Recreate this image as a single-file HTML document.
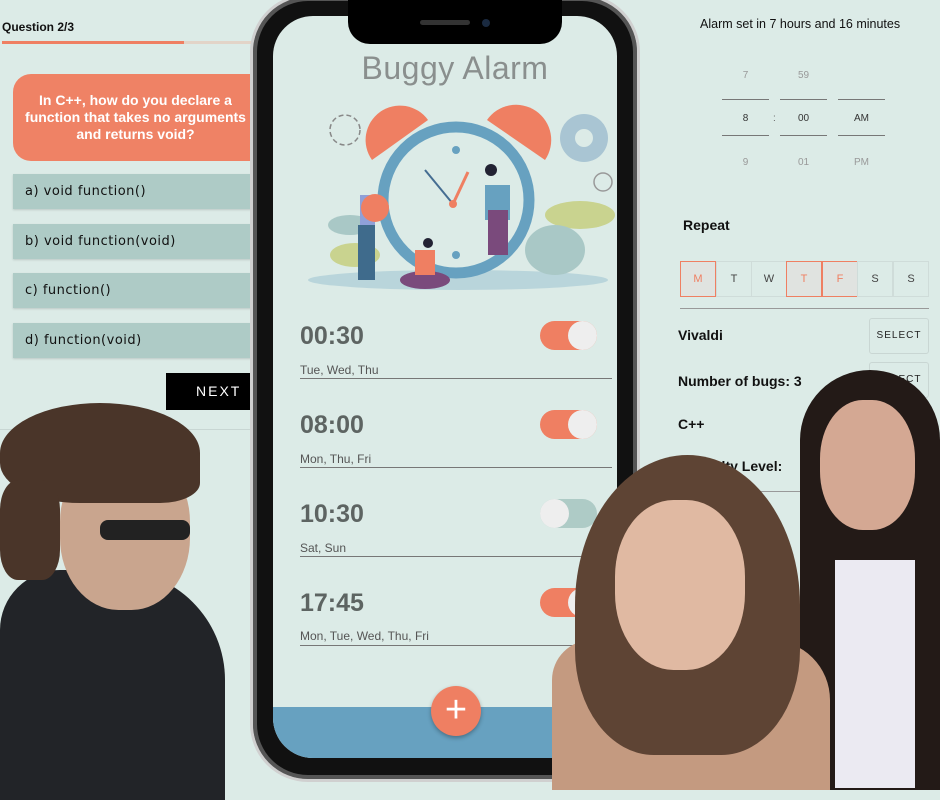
<!DOCTYPE html>
<html><head><meta charset="utf-8"><style>
*{margin:0;padding:0;box-sizing:border-box}
body{width:940px;height:788px;overflow:hidden;background:#dcebe7;font-family:"Liberation Sans",sans-serif;position:relative}
.a{position:absolute}
.opt{position:absolute;left:13px;width:240px;height:35px;background:#aecbc6;font-family:"DejaVu Sans",sans-serif;font-size:13px;letter-spacing:.5px;color:#111;padding:10px 12px;box-shadow:0 1px 2px rgba(0,0,0,.15)}
.t{position:absolute;left:300px;font-weight:bold;font-size:25px;color:#5d6462}
.d{position:absolute;left:300px;font-size:12px;color:#555}
.ln{position:absolute;left:300px;width:312px;height:1px;background:#777}
.tg{position:absolute;left:540px;width:57px;height:29px;border-radius:15px;background:#ef7f62}
.tg i{position:absolute;top:0;right:0;width:29px;height:29px;border-radius:50%;background:#eee}
.day{position:absolute;top:261px;width:36px;height:36px;border:1px solid #cfdcd9;font-size:11px;color:#444;text-align:center;line-height:34px}
.day.on{border-color:#ef7f62;color:#ef7f62;background:#e0e3e0}
.pk{position:absolute;font-size:10px;color:#999;text-align:center;width:47px}
.sel{position:absolute;left:869px;width:60px;height:36px;border:1px solid #c9d6d3;border-radius:3px;font-size:10px;letter-spacing:1px;color:#222;text-align:center;line-height:34px}
.lb{position:absolute;left:678px;font-weight:bold;font-size:14px;color:#111}
</style></head><body>
<div class="a" style="left:2px;top:20px;font-weight:bold;font-size:12px;color:#111">Question 2/3</div>
<div class="a" style="left:2px;top:41px;width:182px;height:3px;background:#ef7f62"></div>
<div class="a" style="left:184px;top:41px;width:70px;height:3px;background:#e2d4c8"></div>
<div class="a" style="left:13px;top:74px;width:245px;height:87px;background:#ef8265;border-radius:18px 0 0 18px;color:#fff;font-weight:bold;font-size:14px;text-align:center;line-height:17px;padding-top:18px">In C++, how do you declare a<br>function that takes no arguments<br>and returns void?</div>
<div class="opt" style="top:174px">a) void function()</div>
<div class="opt" style="top:224px">b) void function(void)</div>
<div class="opt" style="top:273px">c) function()</div>
<div class="opt" style="top:323px">d) function(void)</div>
<div class="a" style="left:166px;top:373px;width:90px;height:37px;background:#000;color:#fff;font-size:14px;letter-spacing:2px;padding:10px 0 0 30px">NEXT</div>
<div class="a" style="left:0;top:429px;width:250px;height:1px;background:#c8d6d3"></div>
<div class="a" style="left:700px;top:17px;font-size:12.5px;color:#111">Alarm set in 7 hours and 16 minutes</div>
<div class="pk" style="left:722px;top:70px">7</div><div class="pk" style="left:780px;top:70px">59</div>
<div class="a" style="left:722px;top:99px;width:47px;height:1px;background:#777"></div><div class="a" style="left:780px;top:99px;width:47px;height:1px;background:#777"></div><div class="a" style="left:838px;top:99px;width:47px;height:1px;background:#777"></div>
<div class="pk" style="left:722px;top:113px;color:#333">8</div><div class="a" style="left:773px;top:113px;font-size:10px;color:#666">:</div><div class="pk" style="left:780px;top:113px;color:#333">00</div><div class="pk" style="left:838px;top:113px;color:#333">AM</div>
<div class="a" style="left:722px;top:135px;width:47px;height:1px;background:#777"></div><div class="a" style="left:780px;top:135px;width:47px;height:1px;background:#777"></div><div class="a" style="left:838px;top:135px;width:47px;height:1px;background:#777"></div>
<div class="pk" style="left:722px;top:157px">9</div><div class="pk" style="left:780px;top:157px">01</div><div class="pk" style="left:838px;top:157px">PM</div>
<div class="a" style="left:683px;top:217px;font-weight:bold;font-size:14px;color:#111">Repeat</div>
<div class="day on" style="left:680px">M</div><div class="day" style="left:716px">T</div><div class="day" style="left:751px">W</div><div class="day on" style="left:786px">T</div><div class="day on" style="left:822px">F</div><div class="day" style="left:857px">S</div><div class="day" style="left:893px">S</div>
<div class="a" style="left:680px;top:308px;width:249px;height:1px;background:#999"></div>
<div class="lb" style="top:327px">Vivaldi</div><div class="sel" style="top:318px">SELECT</div>
<div class="lb" style="top:373px">Number of bugs: 3</div><div class="sel" style="top:362px">SELECT</div>
<div class="lb" style="top:416px">C++</div><div class="sel" style="top:405px">SELECT</div>
<div class="lb" style="top:458px">Difficulty Level:</div>
<div class="a" style="left:680px;top:491px;width:150px;height:1px;background:#999"></div>
<div class="a" style="left:250px;top:-6px;width:390px;height:788px;border-radius:58px;background:#111;border:3px solid #d0d0d0;box-shadow:inset 0 0 0 4px #555"></div>
<div class="a" style="left:273px;top:16px;width:344px;height:742px;border-radius:40px;background:#dcebe7;overflow:hidden">
 <div class="a" style="left:0;top:691px;width:344px;height:51px;background:#67a1c0"></div>
</div>
<div class="a" style="left:348px;top:0;width:214px;height:44px;background:#000;border-radius:0 0 22px 22px"></div>
<div class="a" style="left:420px;top:20px;width:50px;height:5px;border-radius:3px;background:#333"></div>
<div class="a" style="left:482px;top:19px;width:8px;height:8px;border-radius:50%;background:#1a2a40"></div>
<div class="a" style="left:273px;top:50px;width:364px;text-align:center;font-size:32px;color:#8a8f8e;letter-spacing:.5px">Buggy Alarm</div>
<svg class="a" style="left:300px;top:100px" width="315" height="195" viewBox="300 100 315 195">
 <ellipse cx="458" cy="280" rx="150" ry="10" fill="#b9d5db"/>
 <ellipse cx="580" cy="215" rx="35" ry="14" fill="#c9d38f"/>
 <ellipse cx="555" cy="250" rx="30" ry="25" fill="#a9c8c6"/>
 <ellipse cx="350" cy="225" rx="22" ry="10" fill="#a9c8c6"/>
 <ellipse cx="355" cy="255" rx="25" ry="12" fill="#c9d38f"/>
 <circle cx="345" cy="130" r="15" fill="none" stroke="#888" stroke-width="1.5" stroke-dasharray="5 3"/>
 <circle cx="584" cy="138" r="24" fill="#a9c5d3"/><circle cx="584" cy="138" r="9" fill="#dcebe7"/>
 <circle cx="603" cy="182" r="9" fill="none" stroke="#999" stroke-width="1.5"/>
 <path d="M372 160 A30 30 0 0 1 428 120 Z" fill="#ef7f62"/>
 <path d="M487 120 A30 30 0 0 1 545 160 Z" fill="#ef7f62"/>
 <circle cx="456" cy="200" r="73" fill="#dcebe7" stroke="#67a1c0" stroke-width="11"/>
 <line x1="425" y1="170" x2="453" y2="204" stroke="#456d92" stroke-width="2"/>
 <line x1="468" y1="172" x2="453" y2="204" stroke="#ef7f62" stroke-width="3"/>
 <circle cx="453" cy="204" r="4" fill="#ef7f62"/>
 <circle cx="456" cy="150" r="4" fill="#67a1c0"/><circle cx="456" cy="255" r="4" fill="#67a1c0"/>
 <rect x="485" y="185" width="25" height="35" fill="#67a1c0"/><rect x="488" y="210" width="20" height="45" fill="#7a4a7c"/><circle cx="491" cy="170" r="6" fill="#223"/>
 <rect x="360" y="195" width="15" height="30" fill="#8fa0d8"/><rect x="358" y="225" width="17" height="55" fill="#3f6b8c"/><circle cx="375" cy="208" r="14" fill="#ef7f62"/>
 <ellipse cx="425" cy="280" rx="25" ry="9" fill="#7a4a7c"/><rect x="415" y="250" width="20" height="25" fill="#ef7f62"/><circle cx="428" cy="243" r="5" fill="#223"/>
</svg>
<div class="t" style="top:322px">00:30</div><div class="tg" style="top:321px"><i></i></div>
<div class="d" style="top:363px">Tue, Wed, Thu</div><div class="ln" style="top:378px"></div>
<div class="t" style="top:411px">08:00</div><div class="tg" style="top:410px"><i></i></div>
<div class="d" style="top:452px">Mon, Thu, Fri</div><div class="ln" style="top:467px"></div>
<div class="t" style="top:500px">10:30</div><div class="tg" style="top:499px;background:#aecbc6"><i style="right:auto;left:0"></i></div>
<div class="d" style="top:541px">Sat, Sun</div><div class="ln" style="top:556px"></div>
<div class="t" style="top:589px">17:45</div><div class="tg" style="top:588px"><i></i></div>
<div class="d" style="top:629px">Mon, Tue, Wed, Thu, Fri</div><div class="ln" style="top:645px"></div>
<div class="a" style="left:431px;top:686px;width:50px;height:50px;border-radius:50%;background:#ef7f62;color:#fff;font-size:38px;text-align:center;line-height:48px;box-shadow:0 2px 4px rgba(0,0,0,.3)">+</div>
<div class="a" style="left:0;top:570px;width:225px;height:230px;background:#222428;border-radius:60px 110px 0 0"></div>
<div class="a" style="left:60px;top:450px;width:130px;height:160px;background:#c9a58e;border-radius:45%"></div>
<div class="a" style="left:0;top:403px;width:200px;height:100px;background:#4a3529;border-radius:50% 50% 20% 40%"></div>
<div class="a" style="left:0;top:480px;width:60px;height:100px;background:#4a3529;border-radius:30%"></div>
<div class="a" style="left:100px;top:520px;width:90px;height:20px;background:#222;border-radius:8px"></div>
<div class="a" style="left:800px;top:370px;width:140px;height:420px;background:#231a17;border-radius:70px 70px 0 0"></div>
<div class="a" style="left:820px;top:400px;width:95px;height:130px;background:#d4a893;border-radius:45%"></div>
<div class="a" style="left:835px;top:560px;width:80px;height:228px;background:#ebeaf2"></div>
<div class="a" style="left:552px;top:640px;width:278px;height:150px;background:#c49a80;border-radius:40px 60px 0 0"></div>
<div class="a" style="left:575px;top:455px;width:225px;height:300px;background:#5e4434;border-radius:50% 50% 35% 35%"></div>
<div class="a" style="left:615px;top:500px;width:130px;height:170px;background:#e0b9a2;border-radius:45%"></div>
</body></html>
